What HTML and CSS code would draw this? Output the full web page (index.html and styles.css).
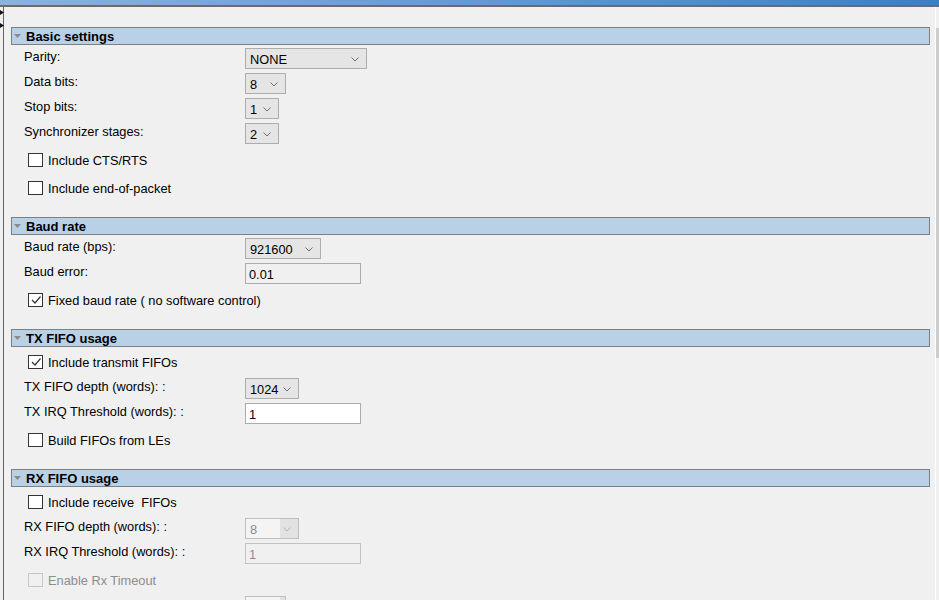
FILE: index.html
```html
<!DOCTYPE html>
<html lang="en">

<head>
    <meta charset="UTF-8">
    <title>UART parameters</title>
    <link rel="stylesheet" href="styles.css">
</head>

<body>
    <div class="titlebar"></div>
    <div class="window">
        <!-- splitter grips on the left edge -->
        <div class="grips">
            <svg width="4" height="5" viewBox="0 0 4 5"><polygon points="0,0 4,2.5 0,5" fill="#111" /></svg>
            <svg width="4" height="5" viewBox="0 0 4 5"><polygon points="0,0 4,2.5 0,5" fill="#111" /></svg>
        </div>

        <div class="panel">
            <!-- Basic settings -->
            <div class="section">
                <div class="section-head">
                    <svg class="caret" width="7" height="4" viewBox="0 0 7 4"><polygon points="0,0 7,0 3.5,4" /></svg>
                    <span>Basic settings</span>
                </div>
                <div class="rows">
                    <div class="row">
                        <label>Parity:</label>
                        <div class="combo w-122"><span>NONE</span><svg class="chev" width="8" height="5" viewBox="0 0 8 5"><polyline points="0.5,0.5 4,4 7.5,0.5" /></svg></div>
                    </div>
                    <div class="row">
                        <label>Data bits:</label>
                        <div class="combo w-41"><span>8</span><svg class="chev" width="8" height="5" viewBox="0 0 8 5"><polyline points="0.5,0.5 4,4 7.5,0.5" /></svg></div>
                    </div>
                    <div class="row">
                        <label>Stop bits:</label>
                        <div class="combo w-34"><span>1</span><svg class="chev" width="8" height="5" viewBox="0 0 8 5"><polyline points="0.5,0.5 4,4 7.5,0.5" /></svg></div>
                    </div>
                    <div class="row">
                        <label>Synchronizer stages:</label>
                        <div class="combo w-34"><span>2</span><svg class="chev" width="8" height="5" viewBox="0 0 8 5"><polyline points="0.5,0.5 4,4 7.5,0.5" /></svg></div>
                    </div>
                    <div class="check-row">
                        <span class="box"></span>
                        <span>Include CTS/RTS</span>
                    </div>
                    <div class="check-row">
                        <span class="box"></span>
                        <span>Include end-of-packet</span>
                    </div>
                </div>
            </div>

            <!-- Baud rate -->
            <div class="section">
                <div class="section-head">
                    <svg class="caret" width="7" height="4" viewBox="0 0 7 4"><polygon points="0,0 7,0 3.5,4" /></svg>
                    <span>Baud rate</span>
                </div>
                <div class="rows">
                    <div class="row">
                        <label>Baud rate (bps):</label>
                        <div class="combo w-76"><span>921600</span><svg class="chev" width="8" height="5" viewBox="0 0 8 5"><polyline points="0.5,0.5 4,4 7.5,0.5" /></svg></div>
                    </div>
                    <div class="row">
                        <label>Baud error:</label>
                        <div class="field readonly">0.01</div>
                    </div>
                    <div class="check-row">
                        <span class="box checked"><svg width="12" height="12" viewBox="0 0 12 12"><polyline points="2,6 5,9 10.5,2.5" /></svg></span>
                        <span>Fixed baud rate ( no software control)</span>
                    </div>
                </div>
            </div>

            <!-- TX FIFO usage -->
            <div class="section">
                <div class="section-head">
                    <svg class="caret" width="7" height="4" viewBox="0 0 7 4"><polygon points="0,0 7,0 3.5,4" /></svg>
                    <span>TX FIFO usage</span>
                </div>
                <div class="rows">
                    <div class="check-row">
                        <span class="box checked"><svg width="12" height="12" viewBox="0 0 12 12"><polyline points="2,6 5,9 10.5,2.5" /></svg></span>
                        <span>Include transmit FIFOs</span>
                    </div>
                    <div class="row">
                        <label>TX FIFO depth (words): :</label>
                        <div class="combo w-54"><span>1024</span><svg class="chev" width="8" height="5" viewBox="0 0 8 5"><polyline points="0.5,0.5 4,4 7.5,0.5" /></svg></div>
                    </div>
                    <div class="row">
                        <label>TX IRQ Threshold (words): :</label>
                        <div class="field">1</div>
                    </div>
                    <div class="check-row">
                        <span class="box"></span>
                        <span>Build FIFOs from LEs</span>
                    </div>
                </div>
            </div>

            <!-- RX FIFO usage -->
            <div class="section">
                <div class="section-head">
                    <svg class="caret" width="7" height="4" viewBox="0 0 7 4"><polygon points="0,0 7,0 3.5,4" /></svg>
                    <span>RX FIFO usage</span>
                </div>
                <div class="rows">
                    <div class="check-row">
                        <span class="box"></span>
                        <span>Include receive&nbsp; FIFOs</span>
                    </div>
                    <div class="row">
                        <label>RX FIFO depth (words): :</label>
                        <div class="combo w-54 disabled"><span>8</span><svg class="chev" width="8" height="5" viewBox="0 0 8 5"><polyline points="0.5,0.5 4,4 7.5,0.5" /></svg></div>
                    </div>
                    <div class="row">
                        <label>RX IRQ Threshold (words): :</label>
                        <div class="field disabled">1</div>
                    </div>
                    <div class="check-row disabled">
                        <span class="box"></span>
                        <span>Enable Rx Timeout</span>
                    </div>
                    <div class="row">
                        <label>Rx Timeout period (bit times): :</label>
                        <div class="combo w-41 disabled"><span>4</span><svg class="chev" width="8" height="5" viewBox="0 0 8 5"><polyline points="0.5,0.5 4,4 7.5,0.5" /></svg></div>
                    </div>
                </div>
            </div>
        </div>

        <div class="scrollbar">
            <div class="thumb"></div>
        </div>
    </div>
</body>

</html>
```

FILE: styles.css
```css
body {
    margin: 0;
    height: 600px;
    overflow: hidden;
    background: #f0f0f0;
    font-family: "Liberation Sans", Arial, sans-serif;
    font-size: 12.8px;
    color: #000;
}

.titlebar {
    height: 5px;
    background: linear-gradient(to right, #8ab3dd, #6397cf 55%, #3f7dc4);
    border-bottom: 2px solid #6b6b6b;
}

.window {
    position: relative;
    display: flex;
    height: 593px;
}

.grips {
    position: absolute;
    left: 0;
    top: 3px;
    display: flex;
    flex-direction: column;
    gap: 8px;
}

.panel {
    flex: 1;
    margin-left: 3px;
    border-left: 1px solid #626262;
    padding: 20px 5px 0 7px;
    overflow: hidden;
}

.scrollbar {
    width: 3px;
    border-left: 1px solid #fff;
}

.scrollbar .thumb {
    margin-top: 21px;
    height: 330px;
    background: #cdcdcd;
}

/* section header bar */
.section {
    padding-bottom: 13px;
}

.section-head {
    display: flex;
    align-items: center;
    height: 16px;
    background: #b9d1e7;
    border: 1px solid #7f7f7f;
    font-size: 13px;
    font-weight: bold;
}

.caret {
    margin: 0 5px 0 2px;
    fill: #8a8a8a;
}

.rows {
    padding: 3px 0 0 13px;
}

.row {
    display: flex;
    height: 21px;
    margin-bottom: 4px;
}

.row label {
    width: 221px;
    line-height: 17px;
}

/* combo boxes */
.combo {
    display: flex;
    align-items: center;
    justify-content: space-between;
    box-sizing: border-box;
    height: 21px;
    padding: 1px 7px 0 4px;
    background: #e5e5e5;
    border: 1px solid #adadad;
}

.combo .chev {
    fill: none;
    stroke: #707070;
    stroke-width: 1;
}

.combo.disabled {
    background: linear-gradient(to right, #f4f4f4 34px, #e2e2e2 34px);
    border-color: #bfbfbf;
    color: #8d8d8d;
}

.combo.disabled .chev {
    stroke: #b0b0b0;
}

.w-34 { width: 34px; }
.w-41 { width: 41px; }
.w-54 { width: 54px; }
.w-76 { width: 76px; }
.w-122 { width: 122px; }

/* text fields */
.field {
    box-sizing: border-box;
    width: 116px;
    height: 21px;
    padding: 1px 3px 0;
    line-height: 19px;
    background: #fff;
    border: 1px solid #acacac;
}

.field.readonly {
    background: #f0f0f0;
}

.field.disabled {
    background: #f0f0f0;
    border-color: #c2c2c2;
    color: #8d8d8d;
}

/* check boxes */
.check-row {
    display: flex;
    align-items: center;
    height: 24px;
    margin-bottom: 4px;
    padding-left: 4px;
}

.check-row span:last-child {
    padding-top: 1px;
}

.box {
    box-sizing: border-box;
    width: 15px;
    height: 14px;
    margin-right: 5px;
    background: #fff;
    border: 1px solid #333;
}

.box svg {
    display: block;
    margin: 0 0 0 1px;
    fill: none;
    stroke: #333;
    stroke-width: 1.2;
}

.check-row.disabled {
    color: #8d8d8d;
}

.check-row.disabled .box {
    background: #f0f0f0;
    border-color: #c6c6c6;
}
```
